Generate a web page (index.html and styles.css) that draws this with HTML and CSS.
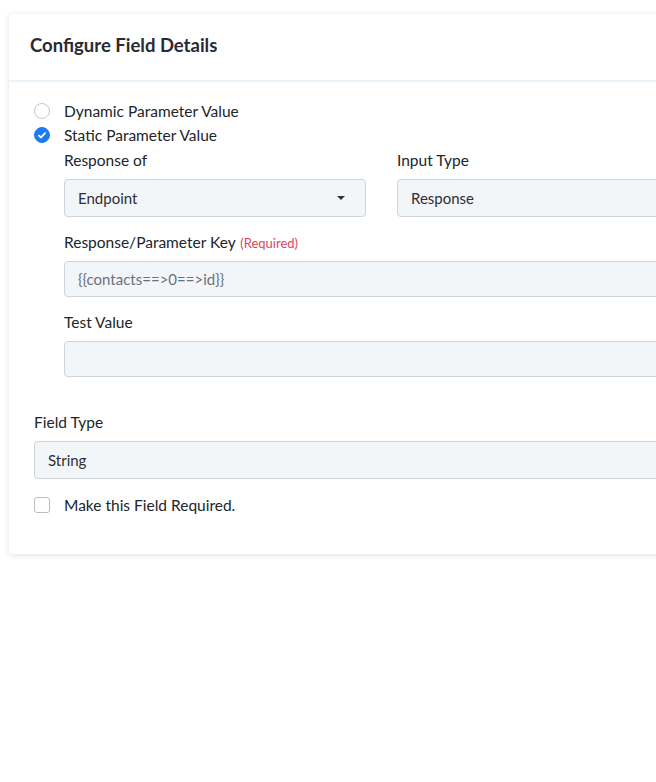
FILE: index.html
```html
<!DOCTYPE html>
<html lang="en">
<head>
  <meta charset="UTF-8" />
  <title>Configure Field Details</title>
  <link rel="stylesheet" href="styles.css">
</head>
<body>
  <div class="pagina">
    <div class="card">
      <div class="card-header">
        <h3>Configure Field Details</h3>
      </div>
      <div class="card-body">
        <div class="opcion">
          <span class="radio"></span>
          <span>Dynamic Parameter Value</span>
        </div>
        <div class="opcion">
          <span class="radio checked">
            <svg width="8" height="7" viewBox="0 0 8 7"><path d="M1 3.6 L3 5.5 L7 1.2" fill="none" stroke="#fff" stroke-width="1.8" stroke-linecap="round" stroke-linejoin="round"/></svg>
          </span>
          <span>Static Parameter Value</span>
        </div>

        <div class="anidado">
          <div class="fila">
            <div class="campo">
              <label>Response of</label>
              <div class="control select">Endpoint<span class="caret"></span></div>
            </div>
            <div class="campo">
              <label>Input Type</label>
              <div class="control">Response</div>
            </div>
          </div>
          <div class="campo">
            <label>Response/Parameter Key <span class="requerido">(Required)</span></label>
            <div class="control corto gris">{{contacts==&gt;0==&gt;id}}</div>
          </div>
          <div class="campo">
            <label>Test Value</label>
            <div class="control corto"></div>
          </div>
        </div>

        <div class="campo tipo">
          <label>Field Type</label>
          <div class="control">String</div>
        </div>

        <div class="opcion check-fila">
          <span class="checkbox"></span>
          <span>Make this Field Required.</span>
        </div>
      </div>
    </div>
  </div>
</body>
</html>
```

FILE: styles.css
```css
body {
  margin: 0;
  font-family: 'Lato', 'Noto Sans', sans-serif;
  background: #ffffff;
  color: #212529;
}
.pagina {
  width: 656px;
  height: 782px;
  overflow: hidden;
  box-sizing: border-box;
  padding: 14px 0 0 9px;
}
.card {
  width: 716px;
  background: #fff;
  border-radius: 4px;
  box-shadow: 0 1px 6px rgba(30, 40, 60, 0.14);
}
.card-header {
  box-sizing: border-box;
  height: 68px;
  border-bottom: 2px solid #eaf2fb;
  display: flex;
  align-items: center;
  padding: 0 0 4px 21px;
}
.card-header h3 {
  margin: 0;
  font-size: 18.5px;
  font-weight: bold;
  color: #2a2a33;
}
.card-body {
  padding: 17px 25px 37px 25px;
}
.opcion {
  display: flex;
  align-items: center;
  height: 24px;
  font-size: 15.5px;
}
.radio {
  width: 14px;
  height: 14px;
  border: 1px solid #c4c8cd;
  border-radius: 50%;
  margin-right: 14px;
  display: flex;
  align-items: center;
  justify-content: center;
}
.radio.checked {
  background: #1a7cf0;
  border-color: #1a7cf0;
}
.anidado {
  padding-left: 30px;
  padding-top: 2px;
}
.fila {
  display: grid;
  grid-template-columns: 302px 302px;
  column-gap: 31px;
}
.campo label {
  display: block;
  font-size: 15.5px;
  line-height: 22px;
  height: 22px;
  margin-bottom: 8px;
}
.requerido {
  color: #e0465a;
  font-size: 13px;
  line-height: 1;
  margin-left: 1px;
}
.campo {
  margin-bottom: 14px;
}
.control {
  box-sizing: border-box;
  height: 38px;
  background: #f3f6f9;
  border: 1px solid #ced3da;
  border-radius: 4px;
  padding: 0 13px;
  font-size: 15px;
  color: #2b2f36;
  display: flex;
  align-items: center;
}
.control.corto {
  height: 36px;
}
.gris {
  color: #6a717a;
}
.select {
  justify-content: space-between;
}
.caret {
  width: 0;
  height: 0;
  border-left: 4px solid transparent;
  border-right: 4px solid transparent;
  border-top: 4px solid #333;
  margin-right: 7px;
}
.tipo {
  margin-top: 34px;
}
.check-fila {
  margin-top: 1px;
}
.checkbox {
  box-sizing: border-box;
  width: 16px;
  height: 16px;
  border: 1px solid #b8bec6;
  border-radius: 3px;
  margin-right: 14px;
}
```
